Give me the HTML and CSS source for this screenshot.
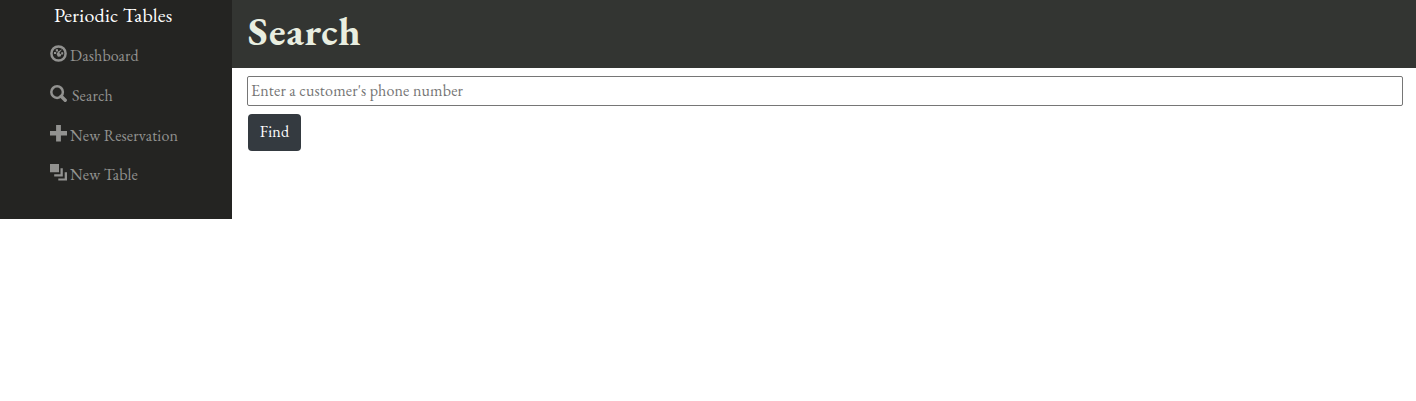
FILE: index.html
```html
<!DOCTYPE html>
<html lang="en">
<head>
<meta charset="utf-8">
<title>Periodic Tables</title>
<link rel="stylesheet" href="styles.css">
</head>
<body>
<div class="layout">
  <nav class="sidebar">
    <a class="brand">Periodic Tables</a>
    <ul class="menu">
      <li class="item dashboard">
        <svg class="icon" viewBox="0 0 17 17"><circle cx="8.5" cy="8.5" r="7.1" fill="none" stroke="currentColor" stroke-width="2.5"/><path d="M4 6.9h2.2v2.2H4zM5.8 4.3H8v2.1H5.8zM9.2 7.9l3-3.7-4.1 2.4-1.5 2.6 1.3 2.6 2.6-.4.8-2zM11.2 7.2h2v2.2h-2z" fill="currentColor"/></svg>
        <span class="label">Dashboard</span>
      </li>
      <li class="item search">
        <svg class="icon" viewBox="0 0 17 17"><circle cx="7.1" cy="7.1" r="5.8" fill="none" stroke="currentColor" stroke-width="2.5"/><path d="M11.2 11.2l4 4" stroke="currentColor" stroke-width="3.4" stroke-linecap="round"/></svg>
        <span class="label">Search</span>
      </li>
      <li class="item reservation">
        <svg class="icon" viewBox="0 0 17 17"><path d="M6.1 0h4.8v6H17v4.4h-6.1v6.2H6.1v-6.2H0V6h6.1z" fill="currentColor"/></svg>
        <span class="label">New Reservation</span>
      </li>
      <li class="item table">
        <svg class="icon" viewBox="0 0 17 17"><path d="M0 0h9v8.3H0zM10.5 4.2h2.3v8.2H4.2v-2.1h6.3zM14.7 8.3H17v8.2H8.3v-2.1h6.4z" fill="currentColor"/></svg>
        <span class="label">New Table</span>
      </li>
    </ul>
  </nav>
  <main class="content">
    <header class="header"><h1 class="title">Search</h1></header>
    <form class="form">
      <input class="phone" type="text" placeholder="Enter a customer's phone number">
      <button class="find" type="button">Find</button>
    </form>
  </main>
</div>
</body>
</html>
```
FILE: styles.css
```css
* { box-sizing: border-box; }
body {
  margin: 0;
  background: #fff;
  font-family: "EB Garamond", "Liberation Serif", serif;
}
.layout { display: flex; align-items: flex-start; }
.sidebar {
  width: 232px;
  height: 219px;
  flex: none;
  background: #242422;
}
.brand {
  display: block;
  padding: 3px 0 0 54px;
  color: #fff;
  font-size: 20px;
  line-height: 24px;
  letter-spacing: 0.24px;
  white-space: nowrap;
}
.menu {
  display: grid;
  grid-auto-rows: 39.7px;
  margin: 9px 0 0;
  padding: 0 0 0 50px;
  list-style: none;
}
.item {
  display: flex;
  gap: 3px;
  padding-top: 9.4px;
  color: #929290;
  font-size: 16px;
  line-height: 21px;
  letter-spacing: 0.14px;
  white-space: nowrap;
}
.search { gap: 5px; }
.icon { width: 17px; height: 17px; flex: none; }
.content { flex: 1; min-width: 0; }
.header {
  height: 68px;
  padding: 7px 0 0 16px;
  background: #333532;
}
.title {
  margin: 0;
  color: #e9eee0;
  font-size: 40px;
  font-weight: 700;
  line-height: 48px;
  letter-spacing: 0.7px;
}
.form {
  display: flex;
  flex-direction: column;
  align-items: flex-start;
  gap: 8px;
  padding: 8px 13px 0 15px;
}
.phone {
  width: 100%;
  height: 30px;
  padding: 0 3px 2px;
  border: 1px solid #767676;
  border-radius: 2px;
  font: 16px "EB Garamond", "Liberation Serif", serif;
  letter-spacing: 0.17px;
}
.phone::placeholder { color: #757575; opacity: 1; }
.find {
  width: 53px;
  height: 37px;
  padding: 0 0 2px 1px;
  border: 0;
  border-radius: 4px;
  margin-left: 0.5px;
  background: #343a40;
  color: #fff;
  font: 16px "EB Garamond", "Liberation Serif", serif;
  letter-spacing: 0.2px;
}
```
